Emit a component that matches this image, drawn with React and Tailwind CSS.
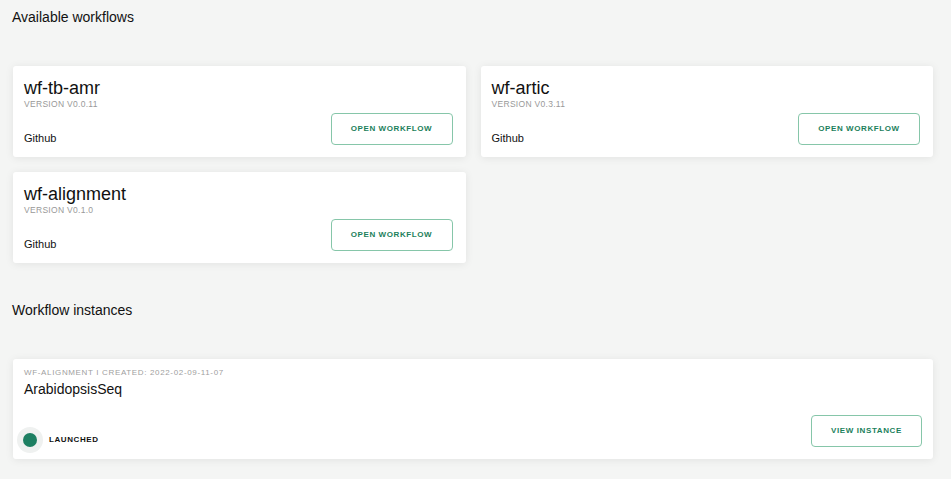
const workflows = [
  { name: 'wf-tb-amr', version: 'VERSION V0.0.11' },
  { name: 'wf-artic', version: 'VERSION V0.3.11' },
  { name: 'wf-alignment', version: 'VERSION V0.1.0' },
]

function OutlineButton({ label, width }) {
  return (
    <button
      className={`h-[32px] ${width} rounded-[4px] border border-[#86c6a9] bg-white text-[8px] font-bold tracking-[0.6px] text-[#1c7f5c] leading-none`}
    >
      {label}
    </button>
  )
}

function WorkflowCard({ name, version }) {
  return (
    <div className="h-[91px] bg-white rounded-[3px] shadow-[0_1px_8px_rgba(0,0,0,0.08)] pt-[11px] pb-[12px] pl-[11px] pr-[13px] flex justify-between">
      <div className="flex flex-col">
        <div className="text-[18px] leading-[22px] text-[#111]">{name}</div>
        <div className="text-[8.5px] leading-[10px] tracking-[0.3px] text-[#999]">{version}</div>
        <div className="mt-auto text-[11px] leading-[14px] text-[#111]">Github</div>
      </div>
      <div className="flex items-end">
        <OutlineButton label="OPEN WORKFLOW" width="w-[122px]" />
      </div>
    </div>
  )
}

export default function App() {
  return (
    <div
      className="min-h-[479px] bg-[#f4f5f4] pl-[13px] pr-[18px] pt-[7px] pb-[20px]"
      style={{ fontFamily: '"Liberation Sans", Arial, sans-serif' }}
    >
      <h2 className="-ml-px text-[14px] leading-[20px] text-[#111]">Available workflows</h2>

      <div className="mt-[39px] grid grid-cols-2 gap-x-[15px] gap-y-[15px]">
        {workflows.map(w => (
          <WorkflowCard key={w.name} {...w} />
        ))}
      </div>

      <h2 className="-ml-px mt-[37px] text-[14px] leading-[20px] text-[#111]">Workflow instances</h2>

      {/* Instance */}
      <div className="mt-[39px] h-[100px] bg-white rounded-[3px] shadow-[0_1px_8px_rgba(0,0,0,0.08)] pt-[9px] pb-[6px] pl-[11px] pr-[11px] flex flex-col">
        <div className="text-[8px] leading-[10px] tracking-[0.65px] text-[#a0a0a0] mb-[2px]">
          WF-ALIGNMENT I CREATED: 2022-02-09-11-07
        </div>
        <div className="text-[14px] leading-[18px] text-[#111]">ArabidopsisSeq</div>
        <div className="mt-auto flex items-end justify-between">
          <div className="flex items-center -ml-[7px]">
            <div className="w-[26px] h-[26px] rounded-full bg-[#eff1f0] flex items-center justify-center">
              <div className="w-[14px] h-[14px] rounded-full bg-[#1d7f62]" />
            </div>
            <span className="ml-[6px] text-[8px] font-bold tracking-[0.6px] text-[#111]">LAUNCHED</span>
          </div>
          <div className="mb-[6px]">
            <OutlineButton label="VIEW INSTANCE" width="w-[111px]" />
          </div>
        </div>
      </div>
    </div>
  )
}
